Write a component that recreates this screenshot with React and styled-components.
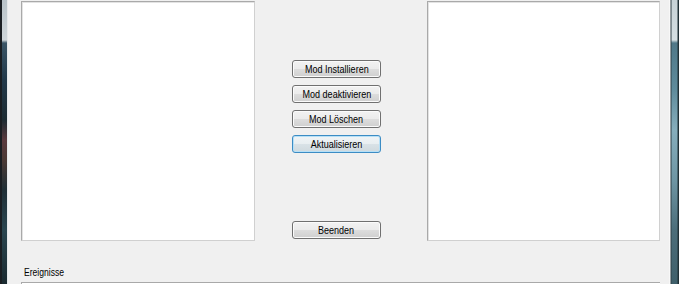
import React from "react";
import styled, { createGlobalStyle } from "styled-components";

const Global = createGlobalStyle`
  html, body { margin: 0; padding: 0; background: #f0f0f0; }
  body { width: 679px; height: 284px; overflow: hidden; font-family: "Liberation Sans", Arial, sans-serif; }
`;

const Window = styled.div`
  display: flex;
  width: 679px;
  height: 284px;
  overflow: hidden;
`;

const LeftFrame = styled.div`
  width: 9px;
  flex: none;
  background:
    linear-gradient(90deg, #1a1e22 0px, #1a1e22 2px, rgba(0,0,0,0) 2px, rgba(0,0,0,0) 7px, #dfe3e5 7px, #f6f6f6 9px),
    linear-gradient(180deg, #b8c2c8 0px, #cfd6da 40px, #3a5566 43px, #22394a 80px, #1d2c33 120px, #5a3a3e 140px, #4b3a35 160px, #1f2f36 190px, #2a4650 230px, #1a2a30 284px);
`;

const RightFrame = styled.div`
  width: 10px;
  flex: none;
  background:
    linear-gradient(90deg, #f4f4f4 0px, #fbfbfb 1px, #2e3e44 2px, rgba(0,0,0,0) 3px, rgba(0,0,0,0) 8px, #22343a 9px, #1e2c30 10px),
    linear-gradient(180deg, #c6d2d6 0px, #d5dfe2 40px, #4f7888 43px, #5f8c9c 90px, #86aebc 130px, #6e96a4 180px, #4c6e7a 230px, #3f5f6a 284px);
`;

const Client = styled.div`
  flex: 1;
  display: flex;
  flex-direction: column;
  padding: 1px 9px 0 12px;
  background: #f0f0f0;
`;

const Main = styled.div`
  display: grid;
  grid-template-columns: 234px 1fr 233px;
  height: 240px;
`;

const ListBox = styled.div`
  box-sizing: border-box;
  height: 240px;
  background: #ffffff;
  border: 1px solid #a9a9a9;
  border-right-color: #d0d0d0;
  border-bottom-color: #d0d0d0;
  box-shadow: inset 1px 1px 0 #e3e3e3;
`;

const Middle = styled.div`
  display: flex;
  flex-direction: column;
  align-items: flex-start;
  padding: 59px 0 2px 37px;
  gap: 7px;
`;

const Button = styled.button`
  box-sizing: border-box;
  width: 89px;
  height: 18px;
  padding: 0;
  display: flex;
  align-items: center;
  justify-content: center;
  overflow: hidden;
  font-family: "Liberation Sans", Arial, sans-serif;
  font-size: 11px;
  line-height: 16px;
  color: #000;
  border-radius: 3px;
  border: 1px solid ${(p) => (p.$focused ? "#3c8cc4" : "#707070")};
  background: ${(p) =>
    p.$focused
      ? "linear-gradient(180deg, #f0f4f6 0%, #e8eef1 50%, #d9e2e7 50%, #cfd9de 100%)"
      : "linear-gradient(180deg, #f2f2f2 0%, #ebebeb 50%, #dddddd 50%, #cfcfcf 100%)"};
  box-shadow: inset 0 0 0 1px ${(p) => (p.$focused ? "#b6e0f7" : "#fbfbfb")};
  margin-top: ${(p) => (p.$push ? "auto" : "0")};
`;

const Narrow = styled.span`
  display: inline-block;
  white-space: nowrap;
  transform: scaleX(${(p) => p.$k || 0.82});
  transform-origin: ${(p) => (p.$left ? "left center" : "center")};
`;

const Footer = styled.div`
  display: flex;
  flex-direction: column;
  padding-top: 25px;
`;

const Label = styled.div`
  font-size: 11px;
  line-height: 13px;
  color: #000;
  padding-left: 3px;
`;

const EventsBox = styled.div`
  margin-top: 3px;
  height: 10px;
  background: #ffffff;
  border-top: 1px solid #a9a9a9;
  border-left: 1px solid #a9a9a9;
`;

export default function App() {
  return (
    <>
      <Global />
      <Window>
        <LeftFrame />
        <Client>
          <Main>
            <ListBox />
            <Middle>
              <Button><Narrow>Mod Installieren</Narrow></Button>
              <Button><Narrow>Mod deaktivieren</Narrow></Button>
              <Button><Narrow>Mod Löschen</Narrow></Button>
              <Button $focused><Narrow>Aktualisieren</Narrow></Button>
              <Button $push><Narrow>Beenden</Narrow></Button>
            </Middle>
            <ListBox />
          </Main>
          <Footer>
            <Label><Narrow $left $k={0.78}>Ereignisse</Narrow></Label>
            <EventsBox />
          </Footer>
        </Client>
        <RightFrame />
      </Window>
    </>
  );
}
